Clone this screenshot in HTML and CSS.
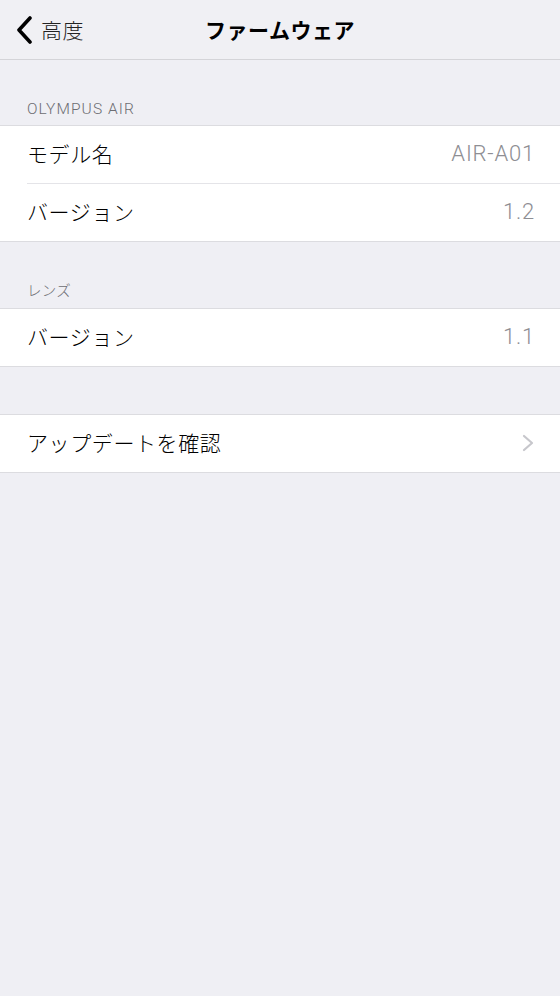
FILE: index.html
```html
<!DOCTYPE html>
<html lang="ja">
<head>
<meta charset="utf-8">
<link rel="stylesheet" href="styles.css">
</head>
<body>
<header class="nav">
  <div class="back">
    <svg class="back-icon" width="18" height="28" viewBox="0 0 18 28"><path d="M14 2 L3 14 L14 26" fill="none" stroke="#000" stroke-width="3.6" stroke-linecap="round" stroke-linejoin="round"/></svg>
    <span class="back-text">高度</span>
  </div>
  <div class="title">ファームウェア</div>
</header>
<main>
  <div class="section-header first">OLYMPUS AIR</div>
  <div class="group">
    <div class="row"><span class="label">モデル名</span><span class="value">AIR-A01</span></div>
    <div class="row"><span class="label">バージョン</span><span class="value">1.2</span></div>
  </div>
  <div class="section-header jp">レンズ</div>
  <div class="group">
    <div class="row"><span class="label">バージョン</span><span class="value">1.1</span></div>
  </div>
  <div class="spacer"></div>
  <div class="group">
    <div class="row"><span class="label">アップデートを確認</span>
      <svg class="chev" width="12" height="18" viewBox="0 0 12 18"><path d="M2 2 L10 9 L2 16" fill="none" stroke="#c7c7cc" stroke-width="2.2" stroke-linecap="round" stroke-linejoin="round"/></svg>
    </div>
  </div>
</main>
</body>
</html>
```
FILE: styles.css
```css
html, body {
  margin: 0;
  padding: 0;
  background: #efeff4;
  font-family: "Noto Sans CJK JP", "Noto Sans", "Liberation Sans", sans-serif;
  font-weight: 300;
  color: #000;
  width: 560px;
  height: 996px;
  overflow: hidden;
}
.nav {
  height: 59px;
  border-bottom: 1px solid #d4d4d8;
  background: #f0f0f4;
  position: relative;
  display: flex;
  align-items: center;
  justify-content: center;
}
.back {
  position: absolute;
  left: 16px;
  top: 0;
  height: 57px;
  display: flex;
  align-items: center;
  gap: 7px;
}
.back-icon { display: block; margin-top: 2px; }
.back-text {
  font-size: 21px;
  color: #222;
  letter-spacing: 0.5px;
}
.title {
  font-size: 21px;
  font-weight: 700;
  letter-spacing: 0.5px;
  padding-bottom: 2px;
}
.section-header {
  font-family: "Roboto", "Liberation Sans", sans-serif;
  font-size: 15.5px;
  color: #6d6d72;
  padding: 0 27px;
  height: 66px;
  box-sizing: border-box;
  display: flex;
  align-items: flex-end;
  padding-bottom: 7px;
  letter-spacing: 1.1px;
}
.section-header.jp {
  font-family: "Noto Sans CJK JP", sans-serif;
  font-size: 14.5px;
  letter-spacing: 0.3px;
  padding-bottom: 8px;
}
.section-header.first { height: 65px; }
.group {
  background: #fff;
  border-top: 1px solid #dcdce0;
  border-bottom: 1px solid #dcdce0;
  padding-left: 27px;
}
.row {
  height: 54px;
  padding-bottom: 3px;
  display: flex;
  align-items: center;
  justify-content: space-between;
  padding-right: 26px;
  font-size: 21px;
}
.row + .row { border-top: 1px solid #e4e4e8; }
.label { letter-spacing: 0.6px; }
.value {
  color: #8e8e93;
  font-family: "Roboto", "Liberation Sans", sans-serif;
  font-weight: 300;
  font-size: 22px;
  letter-spacing: 0.8px;
  margin-right: -1px;
}
.chev { display: block; margin-right: 0; margin-top: 2px; }
.spacer { height: 47px; }
```
